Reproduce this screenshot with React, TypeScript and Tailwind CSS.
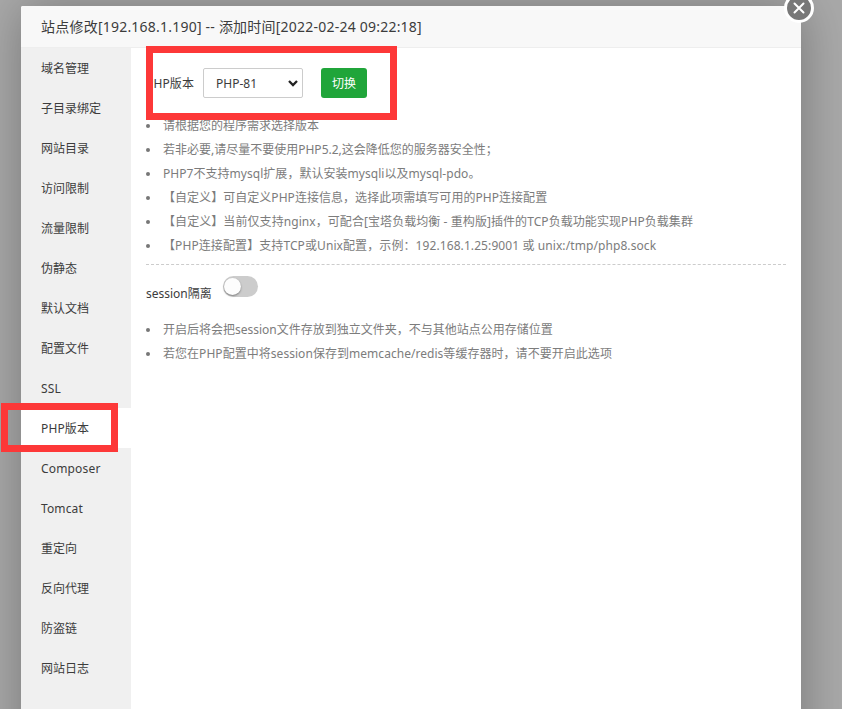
import React, { useState } from 'react';

const menu = [
  { name: '域名管理' },
  { name: '子目录绑定' },
  { name: '网站目录' },
  { name: '访问限制' },
  { name: '流量限制' },
  { name: '伪静态' },
  { name: '默认文档' },
  { name: '配置文件' },
  { name: 'SSL', spacing: 'tracking-[0.2px]' },
  { name: 'PHP版本', spacing: 'tracking-[0.15px]' },
  { name: 'Composer', spacing: 'tracking-[0.17px]' },
  { name: 'Tomcat', spacing: 'tracking-[0.12px]' },
  { name: '重定向' },
  { name: '反向代理' },
  { name: '防盗链' },
  { name: '网站日志' },
];

const versionTips = [
  { text: '请根据您的程序需求选择版本' },
  { text: '若非必要,请尽量不要使用PHP5.2,这会降低您的服务器安全性；' },
  { text: 'PHP7不支持mysql扩展，默认安装mysqli以及mysql-pdo。', spacing: 'tracking-[0.04px]' },
  { text: '【自定义】可自定义PHP连接信息，选择此项需填写可用的PHP连接配置', spacing: 'tracking-[0.04px]' },
  { text: '【自定义】当前仅支持nginx，可配合[宝塔负载均衡 - 重构版]插件的TCP负载功能实现PHP负载集群', spacing: 'tracking-[0.07px]' },
  { text: '【PHP连接配置】支持TCP或Unix配置，示例：192.168.1.25:9001 或 unix:/tmp/php8.sock', spacing: 'tracking-[0.09px]' },
];

const sessionTips = [
  { text: '开启后将会把session文件存放到独立文件夹，不与其他站点公用存储位置' },
  { text: '若您在PHP配置中将session保存到memcache/redis等缓存器时，请不要开启此选项', spacing: 'tracking-[0.04px]' },
];

function Tips({ items }: { items: { text: string; spacing?: string }[] }) {
  return (
    <ul className="text-[#7c7c7c]">
      {items.map((item) => (
        <li key={item.text} className="flex h-6 items-center whitespace-nowrap leading-6">
          <span className="mr-[13px] h-1 w-1 shrink-0 rounded-full bg-[#777]" />
          <span className={item.spacing}>{item.text}</span>
        </li>
      ))}
    </ul>
  );
}

export default function App() {
  const [active, setActive] = useState('PHP版本');
  const [isolated, setIsolated] = useState(false);

  return (
    <div className="relative h-[709px] w-[842px] overflow-hidden bg-[#a9a9a9] pl-[21px] pt-[6px] font-['Noto_Sans','Noto_Sans_CJK_SC',sans-serif] text-xs text-[#3c3c3c]">
      <div className="relative flex h-[760px] w-[780px] flex-col rounded-xs bg-white shadow-[1px_1px_50px_rgba(0,0,0,0.3)]">
        <div className="flex h-[42px] shrink-0 items-center rounded-t-xs border-b border-[#eee] bg-[#f8f8f8] pl-5 text-sm">
          <span className="whitespace-nowrap tracking-[0.22px]">
            站点修改[192.168.1.190] -- 添加时间[2022-02-24 09:22:18]
          </span>
        </div>

        <div className="flex grow">
          {/* Menú lateral */}
          <div className="w-[110px] shrink-0 bg-[#f0f0f0]">
            {menu.map((m) => (
              <p
                key={m.name}
                onClick={() => setActive(m.name)}
                className={`h-10 cursor-pointer whitespace-nowrap pl-5 leading-[42px] ${m.spacing ?? ''} ${active === m.name ? 'bg-white' : ''}`}
              >
                {m.name}
              </p>
            ))}
          </div>

          {/* Contenido */}
          <div className="grow pl-[15px] pr-[15px] pt-5">
            <div className="flex h-[30px] items-center">
              <span className="w-[57px] whitespace-nowrap pt-[2px] tracking-[0.15px]">PHP版本</span>
              <div className="flex h-[30px] w-[100px] items-center justify-between rounded-xs border border-[#ccc] pl-[12px] pr-[4px]">
                <span className="pt-px">PHP-81</span>
                <svg width="10" height="7" viewBox="0 0 10 7" fill="none" stroke="#222" strokeWidth="2.3">
                  <path d="M1 1l4 4 4-4" />
                </svg>
              </div>
              <button className="ml-[18px] h-[30px] w-[46px] rounded-[3px] bg-[#20a53a] pt-[2px] text-white">切换</button>
            </div>

            <div className="pt-4">
              <Tips items={versionTips} />
            </div>

            <div className="mt-[6px] border-t border-dashed border-[#ccc]" />

            <div className="flex h-[53px] pt-[11px]">
              <span className="w-[77px] whitespace-nowrap pt-[9px] leading-[18px]">session隔离</span>
              <button
                onClick={() => setIsolated(!isolated)}
                className="flex h-[21px] w-[35px] rounded-full bg-[#ccc] p-[2px]"
              >
                <span className={`h-[17px] w-[17px] rounded-full bg-[#fdfdfd] shadow-[0_1px_2px_rgba(0,0,0,0.4)] ${isolated ? 'ml-[14px]' : '-ml-px'}`} />
              </button>
            </div>

            <Tips items={sessionTips} />
          </div>
        </div>

        <button className="absolute -top-[13px] left-[763px] flex h-[30px] w-[30px] items-center justify-center rounded-full border-[3px] border-white bg-[#787878]">
          <svg width="12" height="12" viewBox="0 0 12 12" stroke="#fff" strokeWidth="2" strokeLinecap="round">
            <path d="M1.5 1.5l9 9M10.5 1.5l-9 9" />
          </svg>
        </button>
      </div>

      {/* Marcas rojas */}
      <div className="absolute left-[146px] top-[46px] h-[74px] w-[251px] border-[7px] border-[#fd3838]" />
      <div className="absolute left-[1px] top-[403px] h-[49px] w-[117px] border-[7px] border-[#fd3838]" />
    </div>
  );
}
